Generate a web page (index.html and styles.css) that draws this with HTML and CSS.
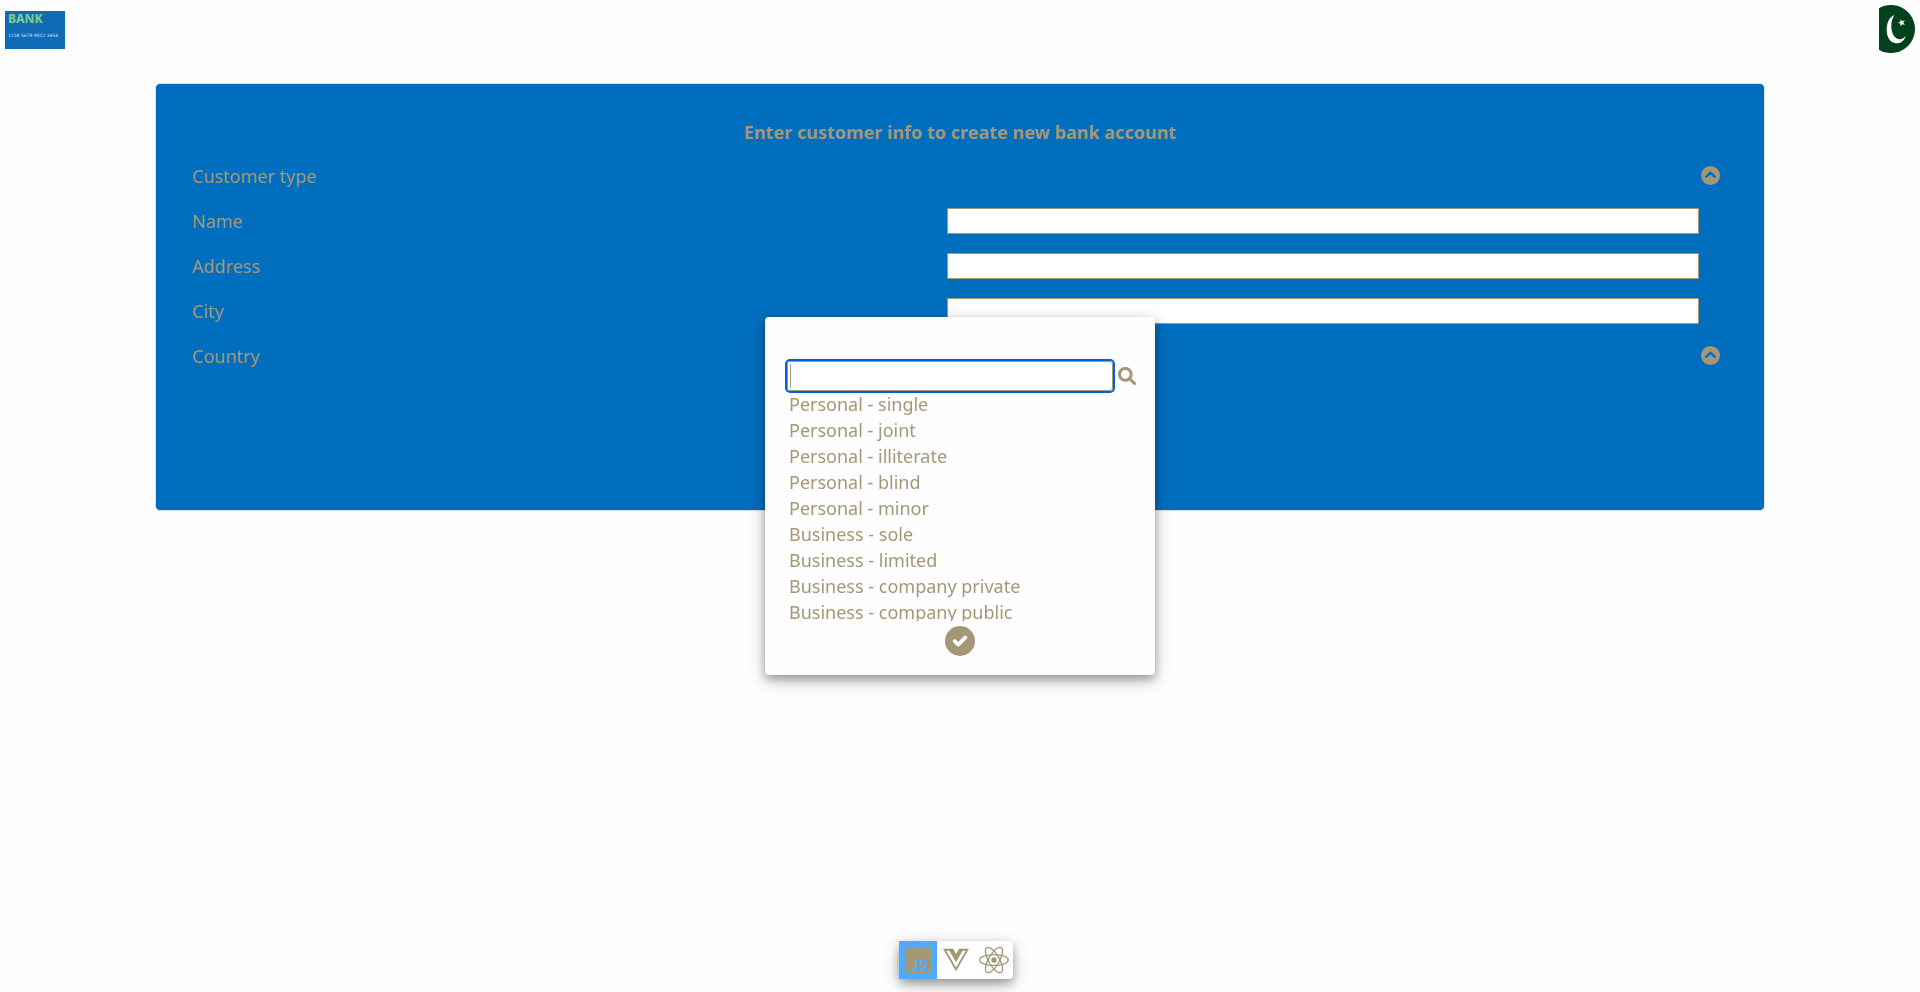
FILE: index.html
```html
<!DOCTYPE html>
<html lang="en">
<head>
<meta charset="utf-8">
<meta name="viewport" content="width=device-width, initial-scale=1">
<title>New bank account</title>
<link rel="stylesheet" href="styles.css">
</head>
<body>
<header class="topbar">
  <a class="logo" href="#" aria-label="Bank home">
    <span class="logo-name">BANK</span>
    <svg class="logo-number" viewBox="0 0 60 6" aria-hidden="true"><text x="0" y="5">1234 5678 9012 3456</text></svg>
  </a>
  <button class="flag" type="button" aria-label="Pakistan">
    <svg viewBox="0 0 36 48" aria-hidden="true">
      <path fill="#01411c" d="M0 3.200A24 24 0 1 1 0 44.800z"/>
      <path fill="#fff" d="M15.300 10C10 12 7.700 18 7.700 25C7.700 33 12 38.300 17.700 38.300C22 38.300 25.500 35.500 26.700 31C24 34 21.500 34.600 19.300 34C13 32.500 9.500 20 15.300 10z"/>
      <path fill="#fff" d="M21.500 14l1.700 2.300 2.700-.8-1.600 2.300 1.600 2.300-2.700-.9-1.700 2.300v-2.800l-2.700-.9 2.700-.9z"/>
    </svg>
  </button>
</header>

<main class="card">
  <h1 class="card-title">Enter customer info to create new bank account</h1>
  <form class="form">
    <div class="row">
      <span class="row-label" id="type-label">Customer type</span>
      <button class="chevron" type="button" aria-labelledby="type-label">
        <svg viewBox="0 0 512 512" aria-hidden="true"><circle cx="256" cy="256" r="256"/><path d="M139 290L256 180L373 290"/></svg>
      </button>
    </div>
    <div class="row">
      <label class="row-label" for="name">Name</label>
      <input class="field" id="name" type="text">
    </div>
    <div class="row">
      <label class="row-label" for="address">Address</label>
      <input class="field" id="address" type="text">
    </div>
    <div class="row">
      <label class="row-label" for="city">City</label>
      <input class="field" id="city" type="text">
    </div>
    <div class="row">
      <span class="row-label" id="country-label">Country</span>
      <button class="chevron" type="button" aria-labelledby="country-label">
        <svg viewBox="0 0 512 512" aria-hidden="true"><circle cx="256" cy="256" r="256"/><path d="M139 290L256 180L373 290"/></svg>
      </button>
    </div>
  </form>
</main>

<dialog class="picker" open aria-label="Customer type">
  <div class="search">
    <input class="search-field" type="text" aria-label="Search" autofocus>
    <button class="search-button" type="button" aria-label="Search">
      <svg viewBox="0 0 18 18" aria-hidden="true"><circle cx="7.300" cy="7.300" r="5.900"/><path d="M11.700 11.700L16.500 16.500"/></svg>
    </button>
  </div>
  <ul class="options">
    <li>Personal - single</li>
    <li>Personal - joint</li>
    <li>Personal - illiterate</li>
    <li>Personal - blind</li>
    <li>Personal - minor</li>
    <li>Business - sole</li>
    <li>Business - limited</li>
    <li>Business - company private</li>
    <li>Business - company public</li>
  </ul>
  <button class="confirm" type="button" aria-label="Confirm">
    <svg viewBox="0 0 512 512" aria-hidden="true"><circle cx="256" cy="256" r="256"/><path d="M164 258L224 318L348 194"/></svg>
  </button>
</dialog>

<nav class="switcher" aria-label="Framework">
  <button class="switch switch-active" type="button" aria-label="JavaScript">
    <svg class="js-icon" width="26" height="26" viewBox="0 0 26 26" aria-hidden="true"><rect width="26" height="26" rx="2" fill="currentColor"/><text class="js-mark" x="7" y="24">JS</text></svg>
  </button>
  <button class="switch" type="button" aria-label="Vue">
    <svg width="26" height="30" viewBox="0 0 448 512" aria-hidden="true"><path fill="currentColor" d="M356.900 64.300H280l-56 88.600-48-88.600H0L224 448 448 64.300h-91.100zm-301.200 32h53.800L224 294.500 338.400 96.300h53.800L224 384.500 55.700 96.300z"/></svg>
  </button>
  <button class="switch" type="button" aria-label="React">
    <svg width="30" height="30" viewBox="0 0 30 30" fill="none" stroke="currentColor" stroke-width="1.300" aria-hidden="true">
      <ellipse cx="15" cy="15" rx="14.300" ry="5.400"/>
      <ellipse cx="15" cy="15" rx="14.300" ry="5.400" transform="rotate(60 15 15)"/>
      <ellipse cx="15" cy="15" rx="14.300" ry="5.400" transform="rotate(120 15 15)"/>
      <circle cx="15" cy="15" r="2.700" fill="currentColor" stroke="none"/>
    </svg>
  </button>
</nav>
</body>
</html>
```

FILE: styles.css
```css
:root {
  --tan: #a39776;
  --blue: #006ebf;
  --paper: #fefefe;
}

* { box-sizing: border-box; }

body {
  margin: 0;
  background: var(--paper);
  color: var(--tan);
  font-family: "Noto Sans", sans-serif;
  font-size: 18px;
  line-height: 26px;
}

button {
  border: 0;
  padding: 0;
  background: none;
  color: inherit;
  font: inherit;
  cursor: pointer;
}

svg { display: block; }

.topbar {
  display: flex;
  justify-content: space-between;
  align-items: flex-start;
  padding: 5px;
}

.logo {
  display: flex;
  flex-direction: column;
  gap: 7px;
  width: 60px;
  height: 38px;
  margin-top: 6px;
  padding: 2px 3px;
  background: #106bb6;
  text-decoration: none;
}

.logo-name {
  color: #77cc88;
  font-size: 12px;
  font-weight: 800;
  line-height: 12px;
}

.logo-number {
  width: 54px;
  height: 6px;
  fill: #d5e6f5;
  font-family: "DejaVu Sans", sans-serif;
  font-size: 5px;
}

.flag svg {
  width: 36px;
  height: 48px;
}

.card {
  margin: 25px 155px 0;
  padding: 35px 44px 132px 36px;
  border: 1px solid #dddddd;
  border-radius: 5px;
  background: var(--blue);
}

.card-title {
  margin: 0 0 8px;
  padding-left: 8px;
  font-size: 18px;
  font-weight: 700;
  text-align: center;
}

.form {
  display: grid;
  grid-auto-rows: 45px;
}

.row {
  display: grid;
  grid-template-columns: 1fr 1fr 19px;
  column-gap: 2px;
  align-items: center;
}

.field {
  width: 100%;
  height: 26px;
  border: 1px solid var(--tan);
  background: #ffffff;
  color: var(--tan);
  font: inherit;
}

.chevron { grid-column: 3; }

.chevron svg {
  width: 19px;
  height: 19px;
}

.chevron circle,
.confirm circle { fill: currentColor; }

.chevron path,
.confirm path {
  fill: none;
  stroke: var(--blue);
  stroke-width: 64;
  stroke-linecap: round;
  stroke-linejoin: round;
}

.picker {
  position: fixed;
  inset: 0;
  width: 390px;
  margin: auto;
  padding: 44px 19px 19px 22px;
  border: 0;
  border-radius: 4px;
  background: var(--paper);
  color: var(--tan);
  box-shadow: 0 4px 10px rgba(0, 0, 0, 0.3), 0 6px 20px rgba(0, 0, 0, 0.2);
}

.search {
  display: flex;
  align-items: center;
  gap: 5px;
}

.search-field {
  flex: 1;
  min-width: 0;
  height: 30px;
  padding: 1px 2px;
  border: 1px solid var(--tan);
  border-radius: 3px;
  outline: 2px solid #0060df;
  background: linear-gradient(var(--tan), var(--tan)) 2px 2px / 1px 24px no-repeat #ffffff;
  caret-color: transparent;
  color: var(--tan);
  font: inherit;
}

.search-button svg {
  width: 18px;
  height: 18px;
  fill: none;
  stroke: currentColor;
  stroke-width: 3;
  stroke-linecap: round;
}

.options {
  height: 230px;
  margin: 0 0 5px;
  padding: 0 0 0 2px;
  overflow: hidden;
  list-style: none;
}

.confirm {
  display: block;
  width: fit-content;
  margin: 0 auto;
  padding-right: 3px;
}

.confirm svg {
  width: 30px;
  height: 30px;
}

.confirm path { stroke: var(--paper); }

.switcher {
  position: fixed;
  bottom: 13px;
  left: 0;
  right: 8px;
  display: flex;
  width: fit-content;
  margin: 0 auto;
  border-radius: 4px;
  background: #ffffff;
  box-shadow: 0 4px 10px rgba(0, 0, 0, 0.3), 0 6px 20px rgba(0, 0, 0, 0.2);
}

.switch {
  display: grid;
  place-items: center;
  width: 38px;
  height: 38px;
}

.switch-active { background: #50aaff; }

.js-icon { overflow: visible; }

.js-mark {
  fill: #50aaff;
  font-family: Lato, sans-serif;
  font-size: 17px;
  font-weight: 900;
}
```
